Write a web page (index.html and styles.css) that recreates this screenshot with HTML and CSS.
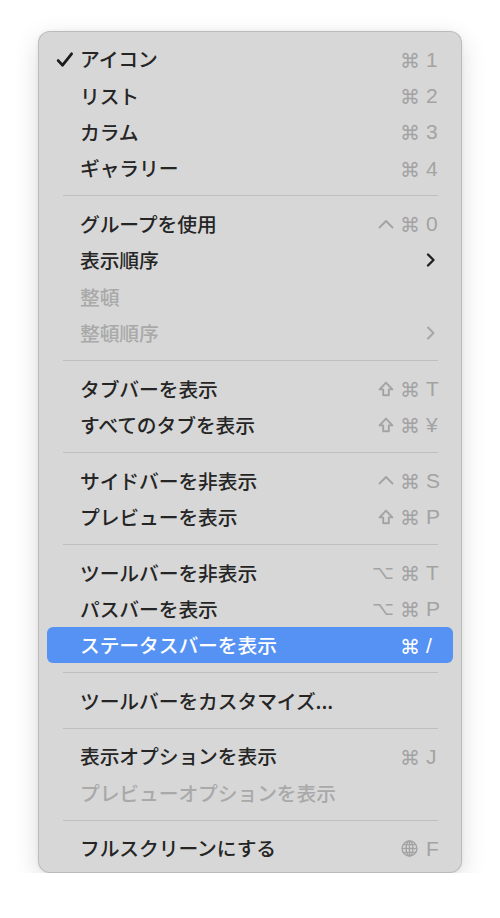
FILE: index.html
```html
<!DOCTYPE html>
<html lang="ja">
<head>
<meta charset="utf-8">
<link rel="stylesheet" href="styles.css">
</head>
<body>
<div class="stage">
  <div class="menu">
    <div class="item"><span class="mark"><svg viewBox="0 0 18 18" width="18" height="18"><path d="M2.2 9.6 L6.6 14.2 L15.6 2.8" fill="none" stroke="#1c1c1c" stroke-width="2.8" stroke-linecap="round" stroke-linejoin="round"/></svg></span><span class="label">アイコン</span><span class="sc"><span class="mod cmd">⌘</span><span class="key">1</span></span></div>
    <div class="item"><span class="mark"></span><span class="label">リスト</span><span class="sc"><span class="mod cmd">⌘</span><span class="key">2</span></span></div>
    <div class="item"><span class="mark"></span><span class="label">カラム</span><span class="sc"><span class="mod cmd">⌘</span><span class="key">3</span></span></div>
    <div class="item"><span class="mark"></span><span class="label">ギャラリー</span><span class="sc"><span class="mod cmd">⌘</span><span class="key">4</span></span></div>
    <div class="sep"></div>
    <div class="item"><span class="mark"></span><span class="label">グループを使用</span><span class="sc"><span class="mod"><svg viewBox="0 0 16 10" width="16" height="10"><path d="M1.5 8.5 L8 2 L14.5 8.5" fill="none" stroke="#a3a3a3" stroke-width="1.8" stroke-linecap="round" stroke-linejoin="round"/></svg></span><span class="mod cmd">⌘</span><span class="key">0</span></span></div>
    <div class="item"><span class="mark"></span><span class="label">表示順序</span><span class="sc"><span class="chev"><svg viewBox="0 0 10 14" width="10" height="14"><path d="M2 1.5 L7.5 7 L2 12.5" fill="none" stroke="#1f1f1f" stroke-width="2.3" stroke-linecap="round" stroke-linejoin="round"/></svg></span></span></div>
    <div class="item disabled"><span class="mark"></span><span class="label">整頓</span><span class="sc"></span></div>
    <div class="item disabled"><span class="mark"></span><span class="label">整頓順序</span><span class="sc"><span class="chev"><svg viewBox="0 0 10 14" width="10" height="14"><path d="M2 1.5 L7.5 7 L2 12.5" fill="none" stroke="#a6a6a6" stroke-width="2" stroke-linecap="round" stroke-linejoin="round"/></svg></span></span></div>
    <div class="sep"></div>
    <div class="item"><span class="mark"></span><span class="label">タブバーを表示</span><span class="sc"><span class="mod"><svg class="shift" viewBox="0 0 16 16" width="16" height="16"><path d="M8 1.6 L14.4 8.4 H10.8 V14.2 H5.2 V8.4 H1.6 Z" fill="none" stroke="#a3a3a3" stroke-width="1.9" stroke-linejoin="round"/></svg></span><span class="mod cmd">⌘</span><span class="key">T</span></span></div>
    <div class="item"><span class="mark"></span><span class="label">すべてのタブを表示</span><span class="sc"><span class="mod"><svg class="shift" viewBox="0 0 16 16" width="16" height="16"><path d="M8 1.6 L14.4 8.4 H10.8 V14.2 H5.2 V8.4 H1.6 Z" fill="none" stroke="#a3a3a3" stroke-width="1.9" stroke-linejoin="round"/></svg></span><span class="mod cmd">⌘</span><span class="key">¥</span></span></div>
    <div class="sep"></div>
    <div class="item"><span class="mark"></span><span class="label">サイドバーを非表示</span><span class="sc"><span class="mod"><svg viewBox="0 0 16 10" width="16" height="10"><path d="M1.5 8.5 L8 2 L14.5 8.5" fill="none" stroke="#a3a3a3" stroke-width="1.8" stroke-linecap="round" stroke-linejoin="round"/></svg></span><span class="mod cmd">⌘</span><span class="key">S</span></span></div>
    <div class="item"><span class="mark"></span><span class="label">プレビューを表示</span><span class="sc"><span class="mod"><svg class="shift" viewBox="0 0 16 16" width="16" height="16"><path d="M8 1.6 L14.4 8.4 H10.8 V14.2 H5.2 V8.4 H1.6 Z" fill="none" stroke="#a3a3a3" stroke-width="1.9" stroke-linejoin="round"/></svg></span><span class="mod cmd">⌘</span><span class="key">P</span></span></div>
    <div class="sep"></div>
    <div class="item"><span class="mark"></span><span class="label">ツールバーを非表示</span><span class="sc"><span class="mod">⌥</span><span class="mod cmd">⌘</span><span class="key">T</span></span></div>
    <div class="item"><span class="mark"></span><span class="label">パスバーを表示</span><span class="sc"><span class="mod">⌥</span><span class="mod cmd">⌘</span><span class="key">P</span></span></div>
    <div class="item active"><span class="mark"></span><span class="label">ステータスバーを表示</span><span class="sc"><span class="mod cmd">⌘</span><span class="key">/</span></span></div>
    <div class="sep"></div>
    <div class="item"><span class="mark"></span><span class="label">ツールバーをカスタマイズ...</span><span class="sc"></span></div>
    <div class="sep"></div>
    <div class="item"><span class="mark"></span><span class="label">表示オプションを表示</span><span class="sc"><span class="mod cmd">⌘</span><span class="key">J</span></span></div>
    <div class="item disabled"><span class="mark"></span><span class="label">プレビューオプションを表示</span><span class="sc"></span></div>
    <div class="sep"></div>
    <div class="item"><span class="mark"></span><span class="label">フルスクリーンにする</span><span class="sc"><span class="mod globe"><svg viewBox="0 0 16 16" width="17" height="17"><g fill="none" stroke="#a3a3a3" stroke-width="1.3"><circle cx="8" cy="8" r="7"/><ellipse cx="8" cy="8" rx="3.2" ry="7"/><line x1="8" y1="1" x2="8" y2="15"/><line x1="1" y1="8" x2="15" y2="8"/><path d="M2.2 4.4 H13.8 M2.2 11.6 H13.8"/></g></svg></span><span class="key">F</span></span></div>
  </div>
</div>
</body>
</html>
```
FILE: styles.css
```css
html, body {
  margin: 0;
  padding: 0;
  background: #ffffff;
}
.stage {
  padding: 31px 0 0 38px;
}
.menu {
  border: 1px solid rgba(0, 0, 0, 0.13);
  border-radius: 12px;
  background: #d7d7d7;
  box-shadow: 0 8px 26px rgba(0, 0, 0, 0.14), 0 0 4px rgba(0, 0, 0, 0.05);
  padding: 9px 8px 6px 8px;
  box-sizing: border-box;
  width: 424px;
  height: 842px;
  display: flex;
  flex-direction: column;
  font-family: "Noto Sans CJK JP", "Noto Sans", sans-serif;
  font-size: 19.8px;
  font-weight: 500;
  color: #252525;
}
.item {
  height: 36.33px;
  flex: none;
  display: flex;
  align-items: center;
  padding: 0 14px 0 9px;
  border-radius: 6px;
  line-height: 1;
}
.mark {
  width: 24px;
  flex: none;
  display: flex;
  align-items: center;
  margin-top: 1px;
}
.label {
  flex: 1;
  white-space: nowrap;
  letter-spacing: -0.1px;
}
.sc {
  display: flex;
  align-items: center;
  gap: 6px;
  color: #a3a3a3;
  font-family: "DejaVu Sans", sans-serif;
  font-weight: 400;
  font-size: 19px;
}
.mod {
  display: inline-flex;
  align-items: center;
}
.cmd {
  font-size: 20px;
  line-height: 1;
  margin-top: 3px;
}
.shift {
  margin-top: 1px;
}
.key {
  width: 13px;
  font-family: "Liberation Sans", sans-serif;
  font-size: 21px;
}
.chev {
  display: flex;
  margin-right: 3px;
}
.globe {
  margin-right: 2px;
}
.disabled {
  color: #a9a9a9;
}
.active {
  background: #5592f4;
  color: #ffffff;
}
.active .sc {
  color: #ffffff;
}
.sep {
  height: 19.33px;
  flex: none;
  display: flex;
  align-items: center;
  padding: 0 15px 0 16px;
}
.sep::before {
  content: "";
  display: block;
  flex: 1;
  height: 1px;
  background: #bfbfbf;
}
```
